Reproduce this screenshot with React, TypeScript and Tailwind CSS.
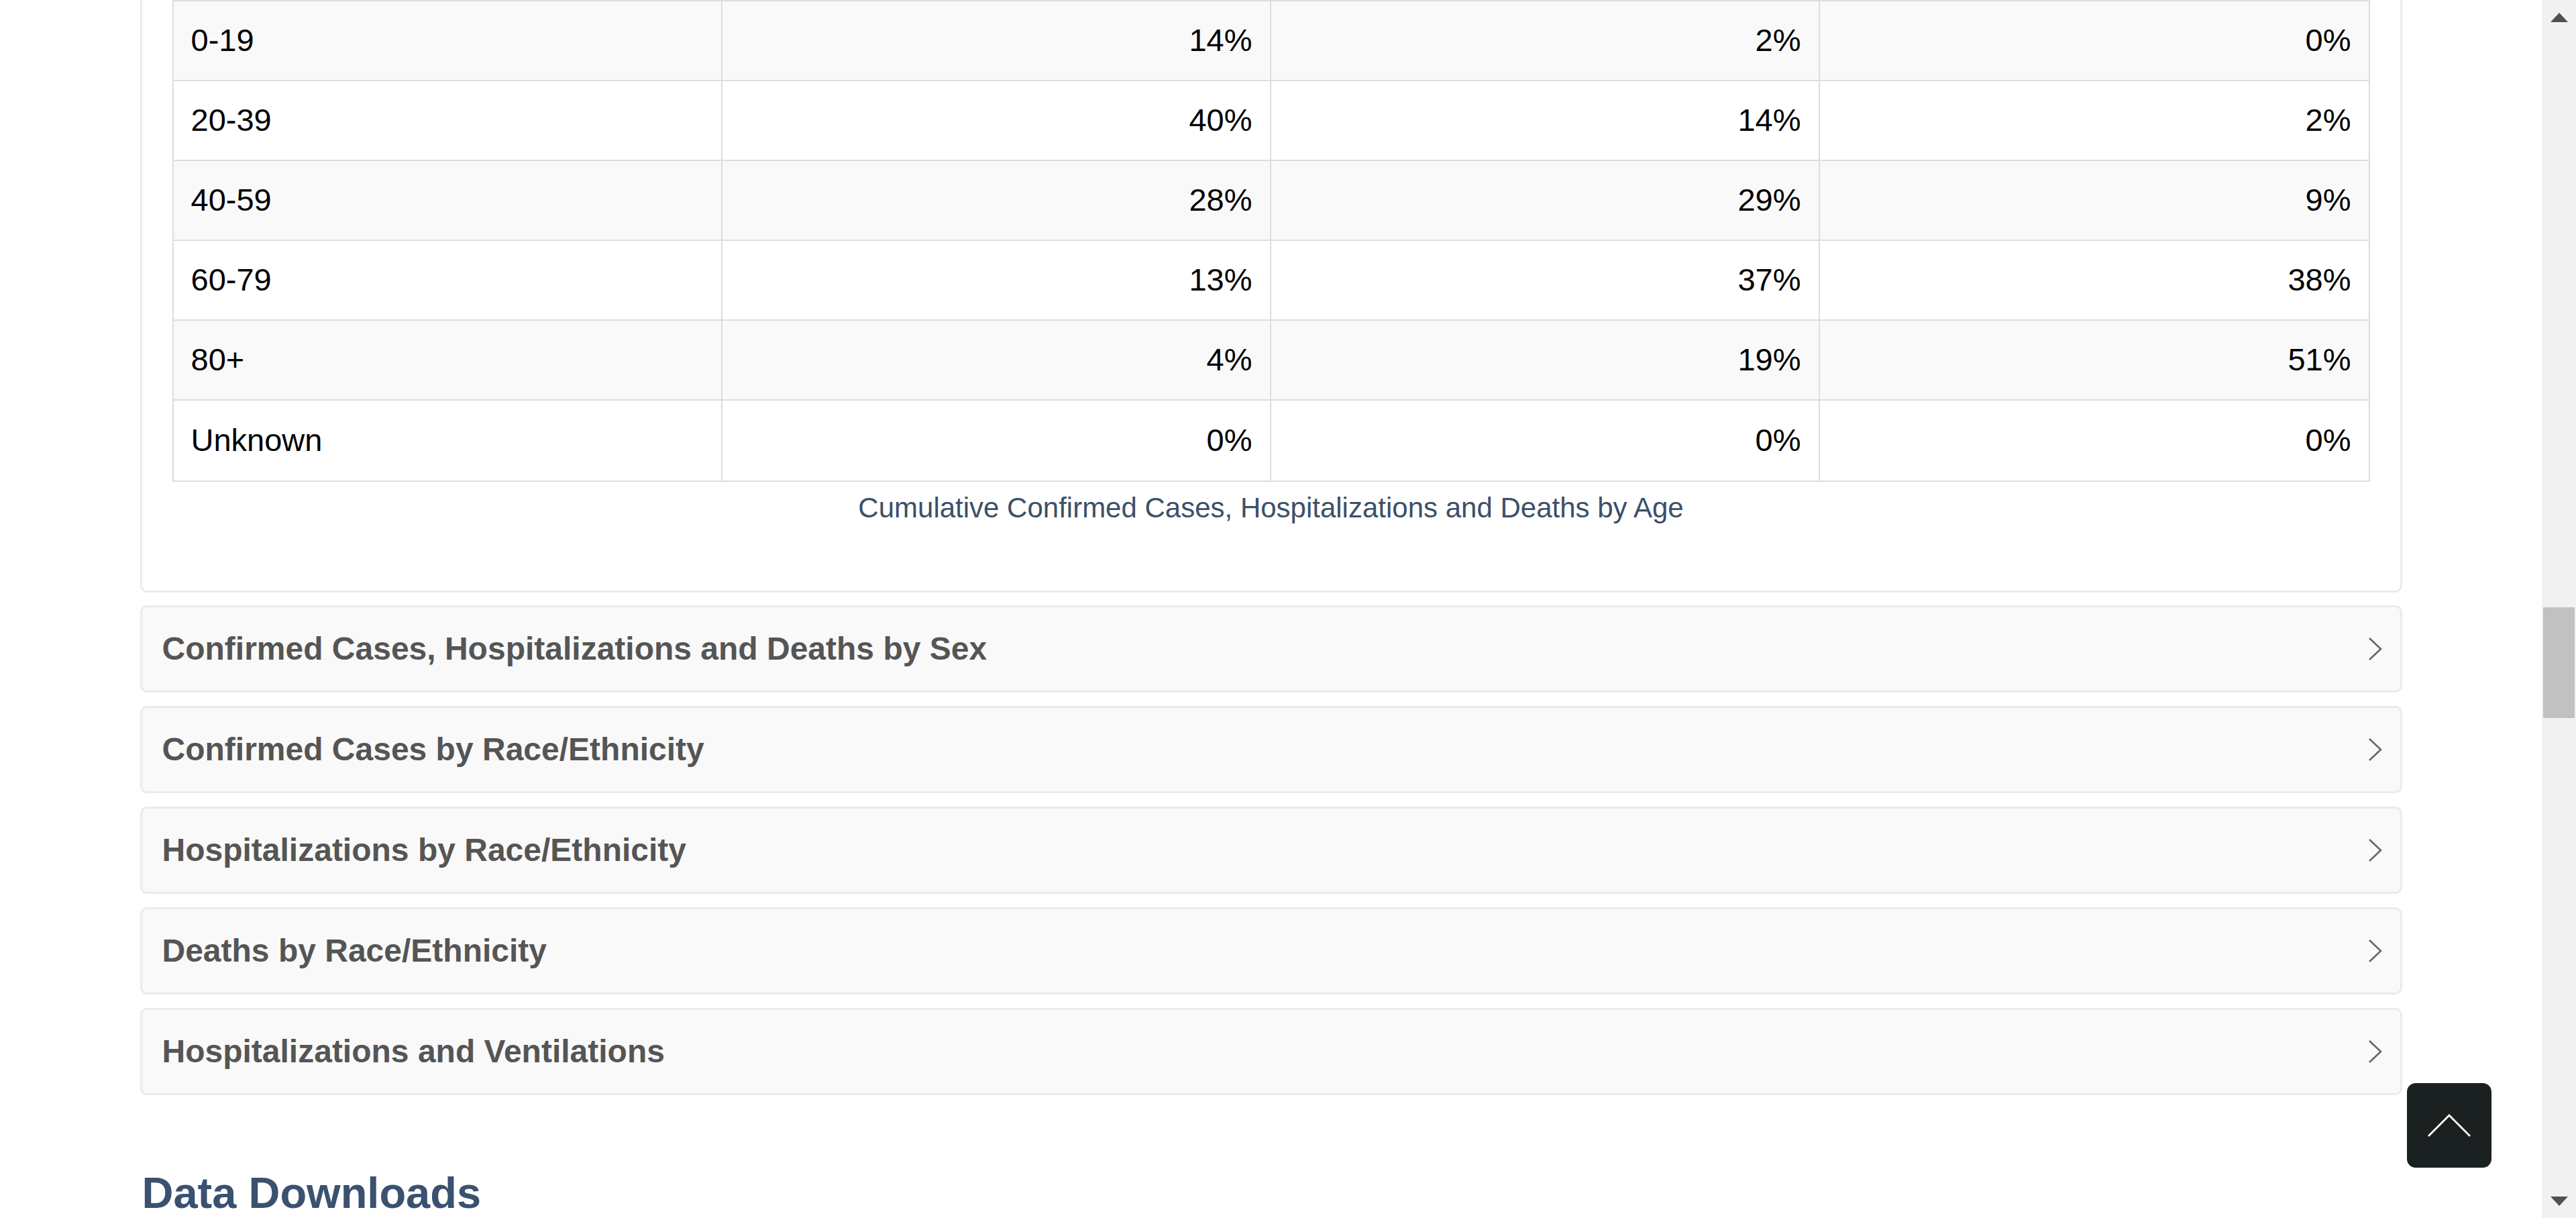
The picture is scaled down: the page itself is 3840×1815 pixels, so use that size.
import React from 'react';

const rows = [
  ['0-19', '14%', '2%', '0%'],
  ['20-39', '40%', '14%', '2%'],
  ['40-59', '28%', '29%', '9%'],
  ['60-79', '13%', '37%', '38%'],
  ['80+', '4%', '19%', '51%'],
  ['Unknown', '0%', '0%', '0%'],
];

const sections = [
  'Confirmed Cases, Hospitalizations and Deaths by Sex',
  'Confirmed Cases by Race/Ethnicity',
  'Hospitalizations by Race/Ethnicity',
  'Deaths by Race/Ethnicity',
  'Hospitalizations and Ventilations',
];

const Chevron = () => (
  <svg width="22" height="36" viewBox="0 0 22 36" fill="none">
    <polyline points="2,2 19,18 2,34" stroke="#666666" strokeWidth="2.6" />
  </svg>
);

const AgeTable = () => (
  <div className="rounded-b-[10px] border-x-[3px] border-b-[3px] border-[#ebebeb] px-[45px] pb-[94px]">
    <div className="border-2 border-[#dddddd]">
      {rows.map((row, i) => (
        <div
          key={row[0]}
          className={`grid h-[119px] grid-cols-4 ${i < rows.length - 1 ? 'border-b-2 border-[#dddddd]' : ''} ${i % 2 === 0 ? 'bg-[#f9f9f9]' : 'bg-white'}`}
        >
          {row.map((cell, j) => (
            <div
              key={j}
              className={`flex items-center px-[26px] ${j === 0 ? 'justify-start' : 'justify-end'} ${j < 3 ? 'border-r-2 border-[#dddddd]' : ''}`}
            >
              {cell}
            </div>
          ))}
        </div>
      ))}
    </div>
    <p className="mt-[10px] text-center text-[42px] leading-[58px] text-[#3b5068]">
      Cumulative Confirmed Cases, Hospitalizations and Deaths by Age
    </p>
  </div>
);

const Scrollbar = () => (
  <div className="flex h-full w-[51px] shrink-0 flex-col bg-[#f1f1f1]">
    <div className="flex h-[51px] items-center justify-center">
      <svg width="26" height="14" viewBox="0 0 26 14">
        <polygon points="13,0 26,14 0,14" fill="#505050" />
      </svg>
    </div>
    <div className="mx-[2px] mt-[854px] h-[165px] bg-[#c1c1c1]" />
    <div className="flex-1" />
    <div className="flex h-[51px] items-center justify-center">
      <svg width="26" height="14" viewBox="0 0 26 14">
        <polygon points="0,0 26,0 13,14" fill="#505050" />
      </svg>
    </div>
  </div>
);

export default function App() {
  return (
    <div
      className="relative flex h-[1815px] w-full overflow-hidden bg-white text-[47px] text-black"
      style={{ fontFamily: '"Liberation Sans", Arial, sans-serif' }}
    >
      <main className="flex-1">
        <div className="mx-auto w-[3372px]">
          <AgeTable />

          <div className="mt-[19px] flex flex-col gap-[20px]">
            {sections.map((title) => (
              <button
                key={title}
                className="flex h-[130px] w-full items-center justify-between rounded-[10px] border-[3px] border-[#ebebeb] bg-[#f9f9f9] pl-[30px] pr-[26px] text-left"
              >
                <span className="text-[48px] font-bold text-[#555555]">{title}</span>
                <Chevron />
              </button>
            ))}
          </div>

          <h2 className="mt-[110px] pl-[3px] text-[65px] font-bold leading-[1.1] text-[#3a5170]">
            Data Downloads
          </h2>
        </div>
      </main>

      <Scrollbar />

      <button
        aria-label="Back to top"
        className="absolute left-[3588px] top-[1614px] flex h-[126px] w-[126px] items-center justify-center rounded-[13px] bg-[#1b2020]"
      >
        <svg width="66" height="36" viewBox="0 0 66 36" fill="none">
          <polyline points="2,34 33,3 64,34" stroke="#ffffff" strokeWidth="2.8" />
        </svg>
      </button>
    </div>
  );
}
